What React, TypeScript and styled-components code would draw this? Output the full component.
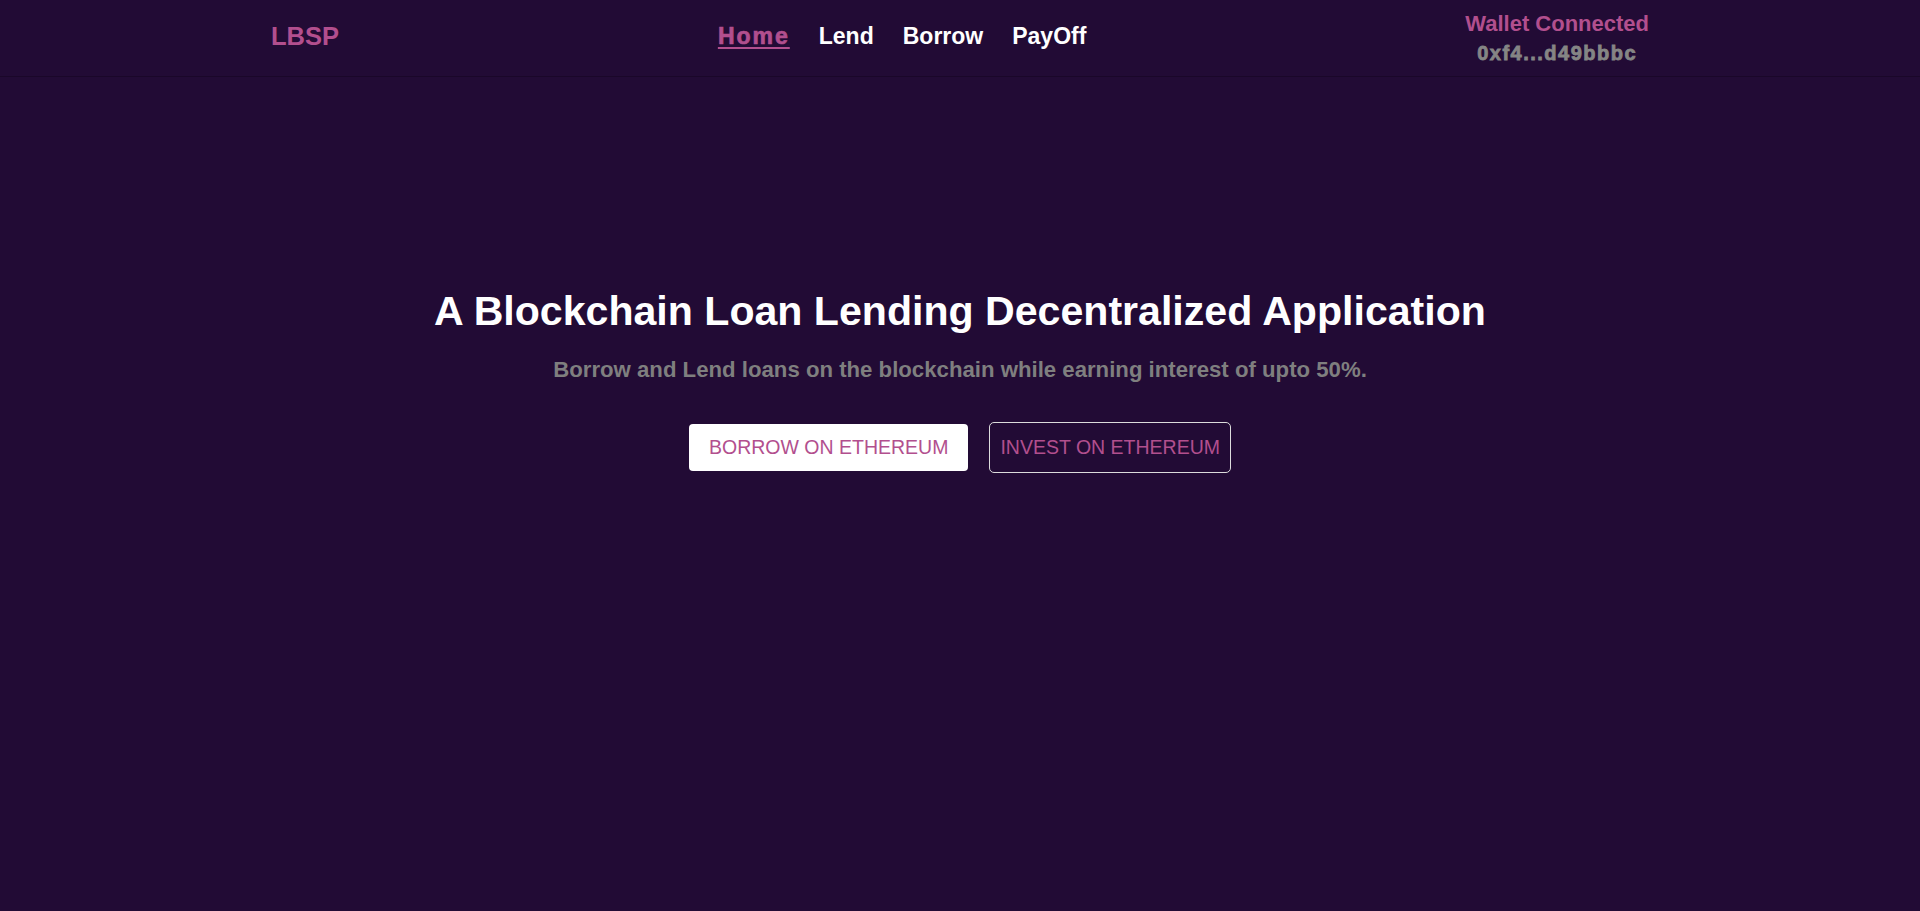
import React from "react";
import styled, { createGlobalStyle } from "styled-components";

const PINK = "#b24f8e";
const BG = "#220b35";

const GlobalStyle = createGlobalStyle`
  html, body {
    margin: 0;
    padding: 0;
    background: ${BG};
    font-family: "Liberation Sans", Arial, sans-serif;
  }
  * { box-sizing: border-box; }
`;

const Page = styled.div`
  min-height: 911px;
  background: ${BG};
  display: flex;
  flex-direction: column;
`;

const Header = styled.header`
  height: 77px;
  border-bottom: 1px solid #1a0729;
  padding-bottom: 4px;
  display: flex;
`;

const HeaderInner = styled.div`
  width: 1378px;
  margin: 0 auto;
  display: flex;
  align-items: center;
  justify-content: space-between;
`;

const Logo = styled.div`
  font-size: 25.5px;
  font-weight: 700;
  color: ${PINK};
  margin-top: 1px;
`;

const Nav = styled.nav`
  display: flex;
  align-items: center;
  gap: 29px;
`;

const NavLink = styled.a<{ $active?: boolean }>`
  font-size: 23px;
  font-weight: 700;
  color: ${(p) => (p.$active ? PINK : "#ffffff")};
  text-decoration: ${(p) => (p.$active ? "underline" : "none")};
  text-decoration-thickness: 2px;
  text-underline-offset: 3px;
  letter-spacing: ${(p) => (p.$active ? "2px" : "0")};
  -webkit-text-stroke: ${(p) => (p.$active ? `0.7px ${PINK}` : "0")};
  cursor: pointer;
`;

const Wallet = styled.div`
  display: flex;
  flex-direction: column;
  align-items: center;
  gap: 5px;
  margin-top: 4px;
`;

const WalletLabel = styled.div`
  font-size: 22px;
  font-weight: 700;
  color: ${PINK};
`;

const WalletAddress = styled.div`
  font-size: 20px;
  font-weight: 700;
  color: #858585;
  letter-spacing: 1.5px;
  -webkit-text-stroke: 0.8px #858585;
`;

const Hero = styled.main`
  display: flex;
  flex-direction: column;
  align-items: center;
  padding-top: 211px;
`;

const Title = styled.h1`
  margin: 0;
  font-size: 41.1px;
  font-weight: 700;
  color: #ffffff;
`;

const Subtitle = styled.p`
  margin: 22px 0 0;
  font-size: 22.2px;
  font-weight: 700;
  color: #7f7f7f;
`;

const ButtonRow = styled.div`
  margin-top: 39px;
  display: flex;
  align-items: center;
  gap: 21px;
`;

const Button = styled.button<{ $variant: "solid" | "outline" }>`
  font-family: "Liberation Sans", Arial, sans-serif;
  font-size: 19.5px;
  font-weight: 400;
  color: ${PINK};
  cursor: pointer;
  display: flex;
  align-items: center;
  background: ${(p) => (p.$variant === "solid" ? "#ffffff" : "transparent")};
  border: ${(p) => (p.$variant === "solid" ? "none" : "1px solid #dcdcdc")};
  border-radius: ${(p) => (p.$variant === "solid" ? "4px" : "5px")};
  height: ${(p) => (p.$variant === "solid" ? "47px" : "51px")};
  padding: ${(p) => (p.$variant === "solid" ? "0 20px" : "0 10px")};
`;

export default function App() {
  return (
    <Page>
      <GlobalStyle />
      <Header>
        <HeaderInner>
          <Logo>LBSP</Logo>
          <Nav>
            <NavLink $active>Home</NavLink>
            <NavLink>Lend</NavLink>
            <NavLink>Borrow</NavLink>
            <NavLink>PayOff</NavLink>
          </Nav>
          <Wallet>
            <WalletLabel>Wallet Connected</WalletLabel>
            <WalletAddress>0xf4...d49bbbc</WalletAddress>
          </Wallet>
        </HeaderInner>
      </Header>
      <Hero>
        <Title>A Blockchain Loan Lending Decentralized Application</Title>
        <Subtitle>
          Borrow and Lend loans on the blockchain while earning interest of upto 50%.
        </Subtitle>
        <ButtonRow>
          <Button $variant="solid">BORROW ON ETHEREUM</Button>
          <Button $variant="outline">INVEST ON ETHEREUM</Button>
        </ButtonRow>
      </Hero>
    </Page>
  );
}
